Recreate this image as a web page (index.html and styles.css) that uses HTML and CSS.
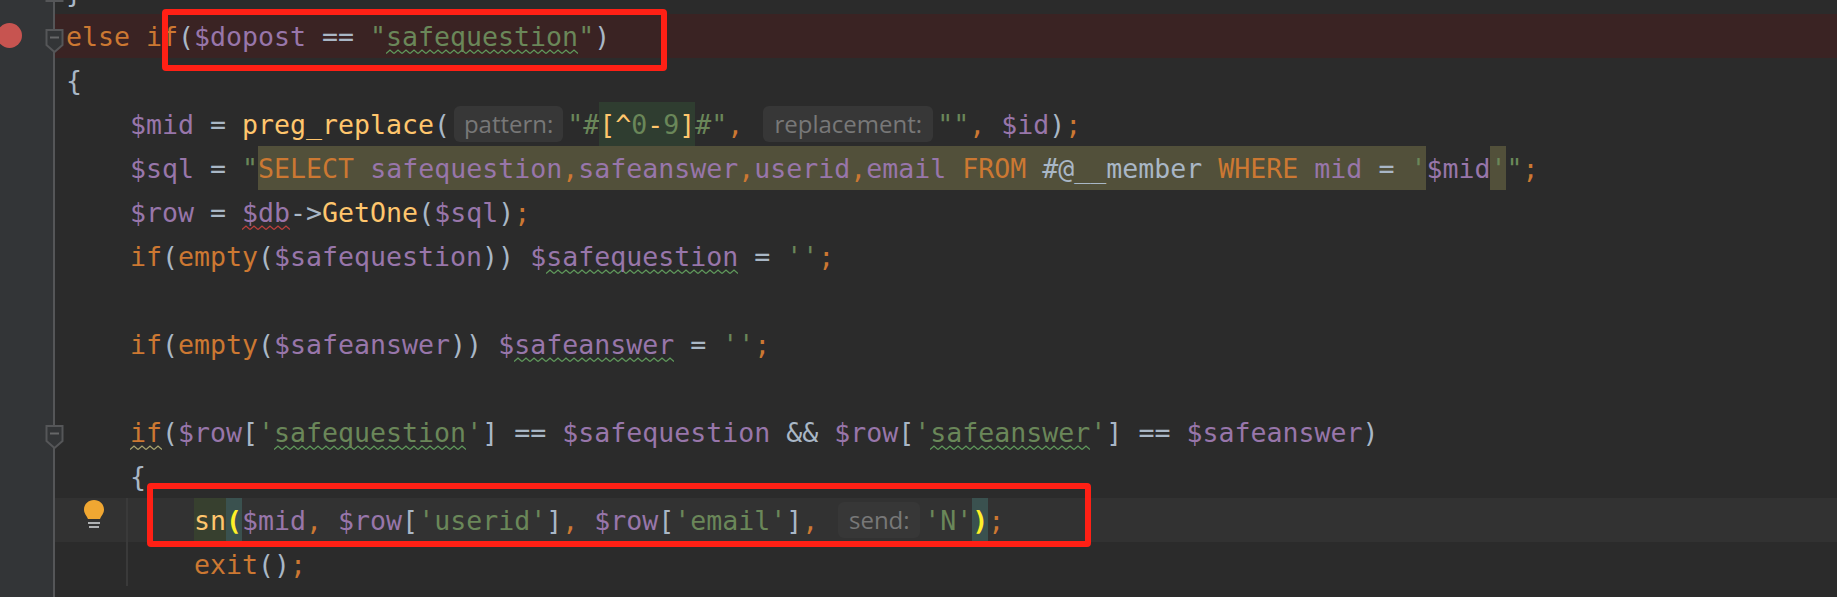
FILE: index.html
```html
<!DOCTYPE html>
<html lang="en">
<head>
<meta charset="utf-8">
<title>Editor</title>
<link rel="stylesheet" href="styles.css">
</head>
<body>
<main class="editor">
  <div class="row">
    <div class="gut"></div>
    <svg class="fold" width="19" height="24" viewBox="0 0 19 24"><path d="M1.500 23V8L9.500 1L17.500 8V23Z"/><path class="fold-dash" d="M5 16H14"/></svg>
    <div class="code"><span class="op">}</span></div>
  </div>
  <div class="row break">
    <div class="gut"></div>
    <span class="dot"></span>
    <svg class="fold" width="19" height="24" viewBox="0 0 19 24"><path d="M1.500 1V16L9.500 23L17.500 16V1Z"/><path class="fold-dash" d="M5 8.500H14"/></svg>
    <div class="code"><span class="kw">else if</span><span class="op">(</span><span class="var">$dopost</span> <span class="op">==</span> <span class="str">"<span class="wavy wavy-g">safequestion</span>"</span><span class="op">)</span></div>
  </div>
  <div class="row">
    <div class="gut"></div>
    <div class="code"><span class="op">{</span></div>
  </div>
  <div class="row">
    <div class="gut"></div>
    <div class="code">    <span class="var">$mid</span> <span class="op">=</span> <span class="fn">preg_replace</span><span class="op">(</span><span class="hint hint-pattern">pattern:</span><span class="str">"#</span><span class="hl hl-green"><span class="fn">[</span><span class="fn">^</span><span class="str">0</span><span class="fn">-</span><span class="str">9</span><span class="fn">]</span></span><span class="str">#"</span><span class="kw">,</span> <span class="hint hint-replacement">replacement:</span><span class="str">""</span><span class="kw">,</span> <span class="var">$id</span><span class="op">)</span><span class="kw">;</span></div>
  </div>
  <div class="row">
    <div class="gut"></div>
    <div class="code">    <span class="var">$sql</span> <span class="op">=</span> <span class="str">"</span><span class="hl hl-sql"><span class="kw">SELECT</span> <span class="var">safequestion</span><span class="kw">,</span><span class="var">safeanswer</span><span class="kw">,</span><span class="var">userid</span><span class="kw">,</span><span class="var">email</span> <span class="kw">FROM</span> <span class="op">#@__member</span> <span class="kw">WHERE</span> <span class="var">mid</span> <span class="op">=</span> <span class="str">'</span></span><span class="var">$mid</span><span class="hl hl-sql"><span class="str">'</span></span><span class="str">"</span><span class="kw">;</span></div>
  </div>
  <div class="row">
    <div class="gut"></div>
    <div class="code">    <span class="var">$row</span> <span class="op">=</span> <span class="var wavy wavy-r">$db</span><span class="op">-&gt;</span><span class="fn">GetOne</span><span class="op">(</span><span class="var">$sql</span><span class="op">)</span><span class="kw">;</span></div>
  </div>
  <div class="row">
    <div class="gut"></div>
    <div class="code">    <span class="kw">if</span><span class="op">(</span><span class="kw">empty</span><span class="op">(</span><span class="var">$safequestion</span><span class="op">))</span> <span class="var">$<span class="wavy wavy-g">safequestion</span></span> <span class="op">=</span> <span class="str">''</span><span class="kw">;</span></div>
  </div>
  <div class="row">
    <div class="gut"></div>
    <div class="code"> </div>
  </div>
  <div class="row">
    <div class="gut"></div>
    <div class="code">    <span class="kw">if</span><span class="op">(</span><span class="kw">empty</span><span class="op">(</span><span class="var">$safeanswer</span><span class="op">))</span> <span class="var">$<span class="wavy wavy-g">safeanswer</span></span> <span class="op">=</span> <span class="str">''</span><span class="kw">;</span></div>
  </div>
  <div class="row">
    <div class="gut"></div>
    <div class="code"> </div>
  </div>
  <div class="row">
    <div class="gut"></div>
    <svg class="fold" width="19" height="24" viewBox="0 0 19 24"><path d="M1.500 1V16L9.500 23L17.500 16V1Z"/><path class="fold-dash" d="M5 8.500H14"/></svg>
    <div class="code">    <span class="kw wavy wavy-y">if</span><span class="op">(</span><span class="var">$row</span><span class="op">[</span><span class="str">'<span class="wavy wavy-g">safequestion</span>'</span><span class="op">]</span> <span class="op">==</span> <span class="var">$safequestion</span> <span class="op">&amp;&amp;</span> <span class="var">$row</span><span class="op">[</span><span class="str">'<span class="wavy wavy-g">safeanswer</span>'</span><span class="op">]</span> <span class="op">==</span> <span class="var">$safeanswer</span><span class="op">)</span></div>
  </div>
  <div class="row">
    <div class="gut"></div>
    <div class="code">    <span class="op">{</span></div>
  </div>
  <div class="row current guide">
    <div class="gut"></div>
    <svg class="bulb" width="20" height="29" viewBox="0 0 20 29"><path class="bulb-glass" d="M10 0C4.500 0 0 4 0 9.500C0 13.500 2.500 15.500 4 19H16C17.500 15.500 20 13.500 20 9.500C20 4 15.500 0 10 0Z"/><path class="bulb-base" d="M4 23H16M5 27H15"/></svg>
    <div class="code">        <span class="hl hl-call"><span class="fn">sn</span></span><span class="hl hl-paren"><span class="match">(</span></span><span class="var">$mid</span><span class="kw">,</span> <span class="var">$row</span><span class="op">[</span><span class="str">'userid'</span><span class="op">]</span><span class="kw">,</span> <span class="var">$row</span><span class="op">[</span><span class="str">'email'</span><span class="op">]</span><span class="kw">,</span> <span class="hint hint-send">send:</span><span class="str">'N'</span><span class="hl hl-paren"><span class="match">)</span></span><span class="kw">;</span></div>
  </div>
  <div class="row guide">
    <div class="gut"></div>
    <div class="code">        <span class="kw">exit</span><span class="op">()</span><span class="kw">;</span></div>
  </div>
  <div class="row">
    <div class="gut"></div>
    <div class="code">    <span class="op">}</span></div>
  </div>
  <div class="mark mark-top"></div>
  <div class="mark mark-bottom"></div>
</main>
</body>
</html>
```

FILE: styles.css
```css
html, body {
  margin: 0;
  height: 100%;
  overflow: hidden;
  background: #2b2b2b;
}
.editor {
  position: relative;
  margin-top: -30px;
  font-family: "DejaVu Sans Mono", "Liberation Mono", monospace;
  font-size: 26.58px;
  color: #a9b7c6;
}
.row {
  position: relative;
  display: flex;
  height: 44px;
}
.gut {
  flex: none;
  width: 53px;
  background: #333537;
  border-right: 2px solid #555658;
}
.code {
  flex: 1;
  padding-left: 11px;
  white-space: pre;
  line-height: 46px;
}
.break .code { background: #3a2323; }
.current .code { background: #323232; }
.guide::before {
  content: "";
  position: absolute;
  left: 126px;
  top: 0;
  width: 2px;
  height: 44px;
  background: #3a3a3a;
  z-index: 1;
}
.kw { color: #cc7832; }
.op { color: #a9b7c6; }
.var { color: #9876aa; }
.str { color: #6a8759; }
.fn { color: #ffc66d; }
.match { color: #ffef28; font-weight: 700; }
.hl {
  display: inline-block;
  height: 44px;
  line-height: 46px;
  vertical-align: top;
}
.hl-green { background: #2f3d30; }
.hl-sql { background: #52503a; }
.hl-call { background: #37402f; }
.hl-paren { background: #3a514f; }
.wavy {
  padding-bottom: 3px;
  background-repeat: repeat-x;
  background-position: 0 100%;
  background-size: 8px 6px;
}
.wavy-g {
  background-image: url("data:image/svg+xml,%3Csvg xmlns='http://www.w3.org/2000/svg' width='8' height='6'%3E%3Cpath d='M0 4.500L4 1L8 4.500' fill='none' stroke='%235f9a5b' stroke-width='1.300'/%3E%3C/svg%3E");
}
.wavy-r {
  background-image: url("data:image/svg+xml,%3Csvg xmlns='http://www.w3.org/2000/svg' width='8' height='6'%3E%3Cpath d='M0 4.500L4 1L8 4.500' fill='none' stroke='%23bc3f3c' stroke-width='1.300'/%3E%3C/svg%3E");
}
.wavy-y {
  background-image: url("data:image/svg+xml,%3Csvg xmlns='http://www.w3.org/2000/svg' width='8' height='6'%3E%3Cpath d='M0 4.500L4 1L8 4.500' fill='none' stroke='%23a8a36e' stroke-width='1.300'/%3E%3C/svg%3E");
}
.hint {
  display: inline-block;
  box-sizing: border-box;
  height: 36px;
  margin: 4px 4px 0;
  border-radius: 6px;
  background: #373737;
  color: #787878;
  font-family: "Open Sans", sans-serif;
  font-size: 24px;
  line-height: 35px;
  text-align: center;
  vertical-align: top;
}
.hint-pattern { width: 109px; }
.hint-replacement { width: 170px; }
.hint-send { width: 82px; }
.fold {
  position: absolute;
  left: 45px;
  top: 15px;
  z-index: 2;
  fill: #333537;
  stroke: #555658;
  stroke-width: 2;
}
.fold-dash { stroke: #666768; }
.row:first-child .fold { top: 8px; }
.dot {
  position: absolute;
  left: -3px;
  top: 9px;
  width: 25px;
  height: 25px;
  border-radius: 50%;
  background: #c75450;
}
.bulb {
  position: absolute;
  left: 84px;
  top: 2px;
  z-index: 2;
}
.bulb-glass { fill: #f0a732; }
.bulb-base { fill: none; stroke: #afb1b3; stroke-width: 2; }
.mark {
  position: absolute;
  box-sizing: border-box;
  border: 6px solid #ff2015;
  border-radius: 4px;
  z-index: 3;
}
.mark-top {
  left: 162px;
  top: 39px;
  width: 505px;
  height: 62px;
}
.mark-bottom {
  left: 147px;
  top: 513px;
  width: 944px;
  height: 64px;
}
```
